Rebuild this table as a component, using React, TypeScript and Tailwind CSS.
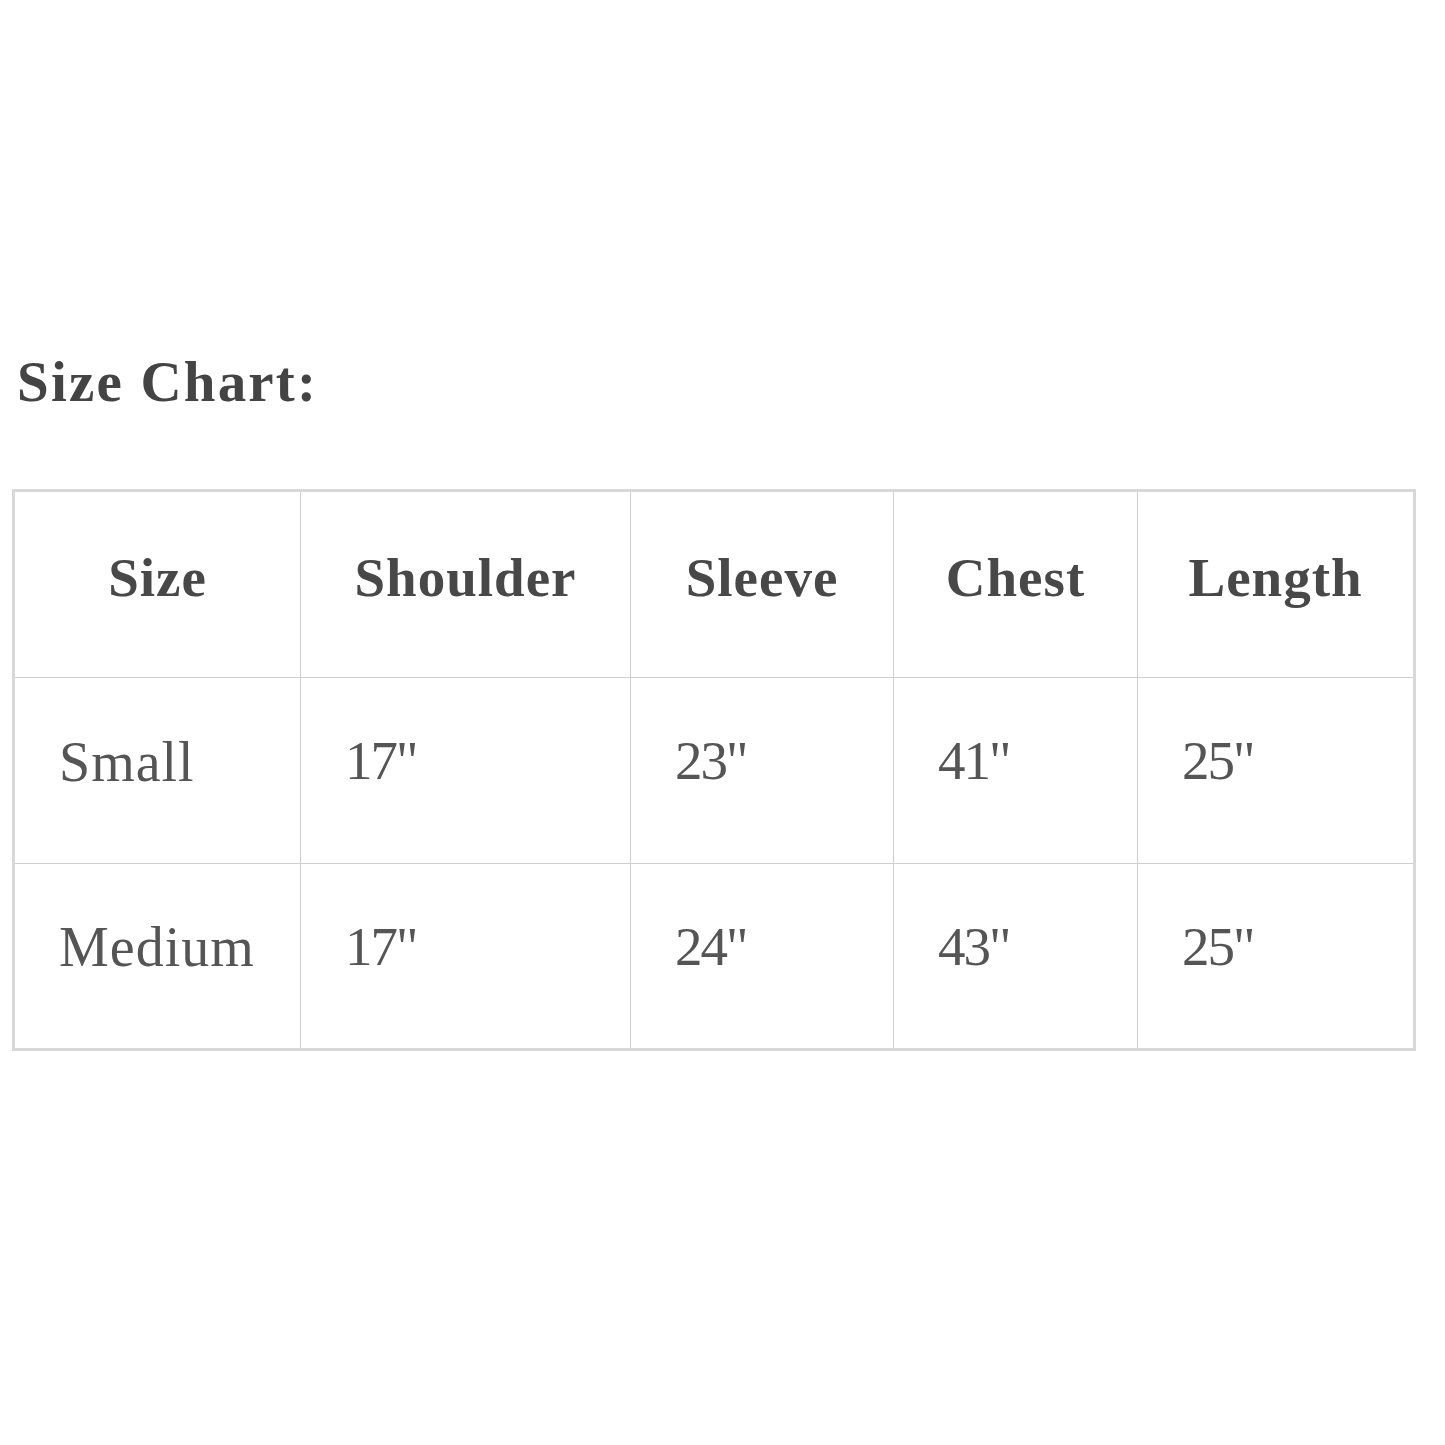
const headers = ["Size", "Shoulder", "Sleeve", "Chest", "Length"];

const rows = [
  ["Small", "17\"", "23\"", "41\"", "25\""],
  ["Medium", "17\"", "24\"", "43\"", "25\""],
];

const widths = ["w-[287px]", "w-[330px]", "w-[263px]", "w-[244px]", "w-[277px]"];

export default function App() {
  return (
    <div className="min-h-[1445px] bg-white px-[12px] pt-[346px] font-['Liberation_Serif',serif]">
      <h2 className="pl-[5px] text-[57px] font-bold leading-[72px] tracking-[2.2px] text-[#444]">
        Size Chart:
      </h2>
      <table className="mt-[71px] w-[1402px] table-fixed border-collapse border-[3px] border-[#d8d8d8]">
        <colgroup>
          {widths.map((w, i) => (
            <col key={i} className={w} />
          ))}
        </colgroup>
        <thead>
          <tr className="h-[187px]">
            {headers.map((h) => (
              <th
                key={h}
                className="border border-[#cfcfcf] pb-[12px] text-center align-middle text-[55px] font-bold tracking-[1px] text-[#484848]"
              >
                {h}
              </th>
            ))}
          </tr>
        </thead>
        <tbody>
          {rows.map((r) => (
            <tr key={r[0]} className="h-[186px]">
              {r.map((c, i) => (
                <td
                  key={i}
                  className={
                    i === 0
                      ? "border border-[#cfcfcf] pb-[18px] pl-[44px] text-left align-middle text-[56px] tracking-[1px] text-[#555]"
                      : "border border-[#cfcfcf] pb-[18px] pl-[44px] text-left align-middle text-[55px] tracking-[-2px] text-[#555]"
                  }
                >
                  {c}
                </td>
              ))}
            </tr>
          ))}
        </tbody>
      </table>
    </div>
  );
}
